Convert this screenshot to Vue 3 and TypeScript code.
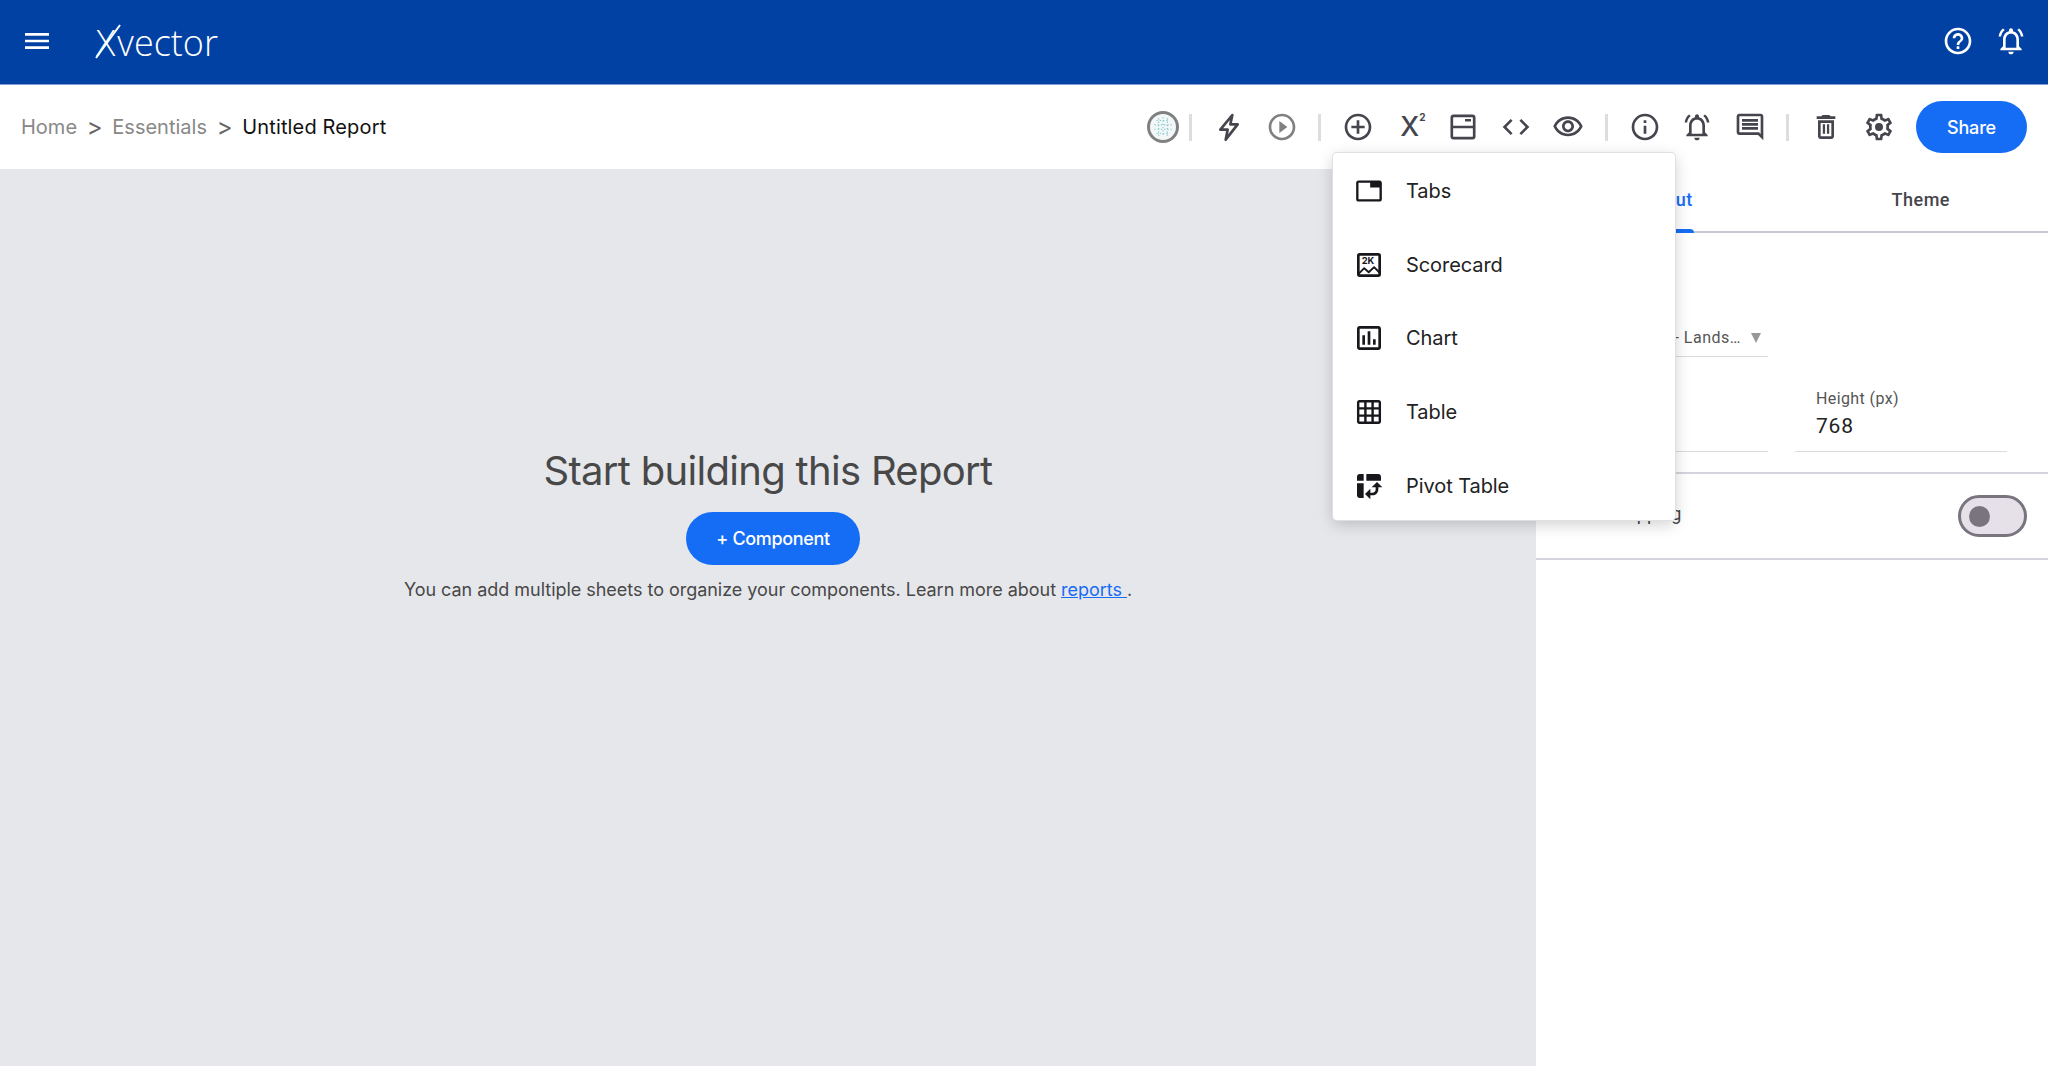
<script setup lang="ts">
interface IconButton {
  name: string
  path: string
}

const circle = 'M12 2C6.48 2 2 6.48 2 12s4.48 10 10 10 10-4.48 10-10S17.52 2 12 2zm0 18c-4.41 0-8-3.59-8-8s3.59-8 8-8 8 3.59 8 8-3.59 8-8 8z'

const bell = 'M12 22c1.1 0 2-.9 2-2h-4c0 1.1.9 2 2 2zm6-6v-5c0-3.07-1.63-5.64-4.5-6.32V4c0-.83-.67-1.5-1.5-1.5s-1.5.67-1.5 1.5v.68C7.64 5.36 6 7.92 6 11v5l-2 2v1h16v-1l-2-2zm-2 1H8v-6c0-2.48 1.51-4.5 4-4.5s4 2.02 4 4.5v6zM7.3 3.8 6 2.6C4.2 4 3 6.2 2.7 8.6h1.9c.3-1.9 1.3-3.6 2.7-4.8zm9.4 0 1.3-1.2c1.8 1.4 3 3.6 3.3 6h-1.9c-.3-1.9-1.3-3.6-2.7-4.8z'

const buildIcons: IconButton[] = [
  { name: 'add', path: `M13 7h-2v4H7v2h4v4h2v-4h4v-2h-4V7z${circle}` },
]

const viewIcons: IconButton[] = [
  { name: 'code', path: 'M9.4 16.6L4.8 12l4.6-4.6L8 6l-6 6 6 6 1.4-1.4zm5.2 0l4.6-4.6-4.6-4.6L16 6l6 6-6 6-1.4-1.4z' },
  { name: 'preview', path: 'M12 6c3.79 0 7.17 2.13 8.82 5.5C19.17 14.87 15.79 17 12 17s-7.17-2.13-8.82-5.5C4.83 8.13 8.21 6 12 6m0-2C7 4 2.73 7.11 1 11.5 2.73 15.89 7 19 12 19s9.27-3.11 11-7.5C21.27 7.11 17 4 12 4zm0 5c1.38 0 2.5 1.12 2.5 2.5S13.38 14 12 14s-2.5-1.12-2.5-2.5S10.62 9 12 9m0-2c-2.48 0-4.5 2.02-4.5 4.5S9.52 16 12 16s4.5-2.02 4.5-4.5S14.48 7 12 7z' },
]

const metaIcons: IconButton[] = [
  { name: 'info', path: `M11 7h2v2h-2zm0 4h2v6h-2z${circle}` },
  { name: 'alerts', path: bell },
  { name: 'comments', path: 'M21.99 4c0-1.1-.89-2-1.99-2H4c-1.1 0-2 .9-2 2v12c0 1.1.9 2 2 2h14l4 4-.01-18zM20 4v13.17L18.83 16H4V4h16zM6 12h12v2H6zm0-3h12v2H6zm0-3h12v2H6z' },
]

const trash = 'M16 9v10H8V9h8m-1.5-6h-5l-1 1H5v2h14V4h-3.5l-1-1zM18 7H6v12c0 1.1.9 2 2 2h8c1.1 0 2-.9 2-2V7zM9.6 10h1.7v7H9.6zm3.1 0h1.7v7h-1.7z'
const gear = 'M19.43 12.98c.04-.32.07-.64.07-.98 0-.34-.03-.66-.07-.98l2.11-1.65c.19-.15.24-.42.12-.64l-2-3.46c-.09-.16-.26-.25-.44-.25-.06 0-.12.01-.17.03l-2.49 1c-.52-.4-1.08-.73-1.69-.98l-.38-2.65C14.46 2.18 14.25 2 14 2h-4c-.25 0-.46.18-.49.42l-.38 2.65c-.61.25-1.17.59-1.69.98l-2.49-1c-.06-.02-.12-.03-.18-.03-.17 0-.34.09-.43.25l-2 3.46c-.13.22-.07.49.12.64l2.11 1.65c-.04.32-.07.65-.07.98 0 .33.03.66.07.98l-2.11 1.65c-.19.15-.24.42-.12.64l2 3.46c.09.16.26.25.44.25.06 0 .12-.01.17-.03l2.49-1c.52.4 1.08.73 1.69.98l.38 2.65c.03.24.24.42.49.42h4c.25 0 .46-.18.49-.42l.38-2.65c.61-.25 1.17-.59 1.69-.98l2.49 1c.06.02.12.03.18.03.17 0 .34-.09.43-.25l2-3.46c.12-.22.07-.49-.12-.64l-2.11-1.65zm-1.98-1.71c.04.31.05.52.05.73 0 .21-.02.43-.05.73l-.14 1.13.89.7 1.08.84-.7 1.21-1.27-.51-1.04-.42-.9.68c-.43.32-.84.56-1.25.73l-1.06.43-.16 1.13-.2 1.35h-1.4l-.19-1.35-.16-1.13-1.06-.43c-.43-.18-.83-.41-1.23-.71l-.91-.7-1.06.43-1.27.51-.7-1.21 1.08-.84.89-.7-.14-1.13c-.03-.31-.05-.54-.05-.74s.02-.43.05-.73l.14-1.13-.89-.7-1.08-.84.7-1.21 1.27.51 1.04.42.9-.68c.43-.32.84-.56 1.25-.73l1.06-.43.16-1.13.2-1.35h1.39l.19 1.35.16 1.13 1.06.43c.43.18.83.41 1.23.71l.91.7 1.06-.43 1.27-.51.7 1.21-1.07.85-.89.7.14 1.13zM12 9a3 3 0 1 0 0 6 3 3 0 0 0 0-6z'

const menuItems = [
  { label: 'Tabs', viewBox: '-1.7 -1.7 27.4 27.4', path: 'M21 3H3c-1.1 0-2 .9-2 2v14c0 1.1.9 2 2 2h18c1.1 0 2-.9 2-2V5c0-1.1-.9-2-2-2zm0 16H3V5h10v4h8v10z' },
  { label: 'Scorecard', viewBox: '0 0 24 24', path: '' },
  { label: 'Chart', viewBox: '0 0 24 24', path: 'M19 3H5c-1.1 0-2 .9-2 2v14c0 1.1.9 2 2 2h14c1.1 0 2-.9 2-2V5c0-1.1-.9-2-2-2zm0 16H5V5h14v14zM7 10h2v7H7zm4-3h2v10h-2zm4 6h2v4h-2z' },
  { label: 'Table', viewBox: '-1.3 -1.3 26.6 26.6', path: 'M20 2H4c-1.1 0-2 .9-2 2v16c0 1.1.9 2 2 2h16c1.1 0 2-.9 2-2V4c0-1.1-.9-2-2-2zM8 20H4v-4h4v4zm0-6H4v-4h4v4zm0-6H4V4h4v4zm6 12h-4v-4h4v4zm0-6h-4v-4h4v4zm0-6h-4V4h4v4zm6 12h-4v-4h4v4zm0-6h-4v-4h4v4zm0-6h-4V4h4v4z' },
  { label: 'Pivot Table', viewBox: '0 0 24 24', path: 'M10 8h11V5c0-1.1-.9-2-2-2h-9v5zM3 8h5V3H5c-1.1 0-2 .9-2 2v3zm2 13h3V10H3v9c0 1.1.9 2 2 2zm8 1l-4-4 4-4zm1-9l4-4 4 4zm.58 6H13v-2h1.58c1.33 0 2.42-1.08 2.42-2.42V13h2v1.58c0 2.44-1.98 4.42-4.42 4.42z' },
]
</script>

<template>
  <div class="page">
    <header class="topbar">
      <svg class="top-icon menu-btn" viewBox="0 0 24 24"><path d="M3 18h18v-2H3v2zm0-5h18v-2H3v2zm0-7v2h18V6H3z" /></svg>
      <div class="logo">
        <span class="logo-x">X</span>vector
        <svg class="logo-stroke" viewBox="0 0 40 40"><line x1="1" y1="36" x2="25" y2="3" /></svg>
      </div>
      <div class="top-actions">
        <svg class="top-icon" viewBox="0 0 24 24"><path d="M11 18h2v-2h-2v2zm1-16C6.48 2 2 6.48 2 12s4.48 10 10 10 10-4.48 10-10S17.52 2 12 2zm0 18c-4.41 0-8-3.59-8-8s3.59-8 8-8 8 3.59 8 8-3.59 8-8 8zm0-14c-2.21 0-4 1.79-4 4h2c0-1.1.9-2 2-2s2 .9 2 2c0 2-3 1.75-3 5h2c0-2.25 3-2.5 3-5 0-2.21-1.79-4-4-4z" /></svg>
        <svg class="top-icon" viewBox="0 0 24 24"><path :d="bell" /></svg>
      </div>
    </header>

    <div class="toolbar">
      <nav class="crumbs">
        <span class="crumb">Home</span>
        <span class="crumb-sep">&gt;</span>
        <span class="crumb">Essentials</span>
        <span class="crumb-sep">&gt;</span>
        <span class="crumb current">Untitled Report</span>
      </nav>

      <div class="tools">
        <span class="avatar">
          <svg viewBox="0 0 24 24">
            <path d="M6 6h12M4 10h16M4 14h16M6 18h12M8 4v16M12 3v18M16 4v16" fill="none" stroke="#86c5ca" stroke-width="1" stroke-dasharray="1.2 1.8" />
          </svg>
        </span>
        <i class="sep" />
        <button class="tool" type="button">
          <svg viewBox="0 0 24 24"><path class="outline" d="M14.5 3 5.5 14H11l-1.5 7.5L18.5 10H13z" /></svg>
        </button>
        <button class="tool muted" type="button">
          <svg viewBox="0 0 24 24"><path :d="`M10 16.5l6-4.5-6-4.5v9z${circle}`" /></svg>
        </button>
        <i class="sep" />
        <button v-for="icon in buildIcons" :key="icon.name" class="tool" type="button">
          <svg viewBox="0 0 24 24"><path :d="icon.path" /></svg>
        </button>
        <button class="tool formula" type="button">X<sup>2</sup></button>
        <button class="tool" type="button">
          <svg viewBox="0 0 24 24">
            <rect class="outline" x="3.6" y="3.6" width="16.8" height="16.8" rx="1.4" />
            <path d="M3.6 11h16.8v2H3.6zM13.5 6h4.5v1.8h-4.5z" />
          </svg>
        </button>
        <button v-for="icon in viewIcons" :key="icon.name" class="tool" type="button">
          <svg viewBox="0 0 24 24"><path :d="icon.path" /></svg>
        </button>
        <i class="sep" />
        <button v-for="icon in metaIcons" :key="icon.name" class="tool" type="button">
          <svg viewBox="0 0 24 24"><path :d="icon.path" /></svg>
        </button>
        <i class="sep" />
        <button class="tool" type="button">
          <svg viewBox="0 0 24 24"><path :d="trash" /></svg>
        </button>
        <button class="tool" type="button">
          <svg viewBox="0 0 24 24"><path :d="gear" /></svg>
        </button>
        <button class="share" type="button">Share</button>
      </div>

      <ul class="add-menu">
        <li v-for="item in menuItems" :key="item.label" class="add-item">
          <svg v-if="item.path" :viewBox="item.viewBox"><path :d="item.path" /></svg>
          <svg v-else viewBox="0 0 24 24">
            <rect class="outline" x="4" y="4" width="16" height="16" rx="1" />
            <text class="kpi" x="6.5" y="11.4">2K</text>
            <path class="outline zig" d="M4 18.8l4.4-4.4 3.4 3 4-3.8 4.2 4.2" />
          </svg>
          <span>{{ item.label }}</span>
        </li>
      </ul>
    </div>

    <main class="workspace">
      <section class="canvas">
        <h1>Start building this Report</h1>
        <button class="add-component" type="button">+ Component</button>
        <p>
          You can add multiple sheets to organize your components. Learn more about
          <a href="#">reports </a>.
        </p>
      </section>

      <aside class="panel">
        <div class="tabs">
          <div class="tab active">Layout</div>
          <div class="tab">Theme</div>
        </div>

        <div class="form">
          <div class="select">
            <span>A4 - Lands…</span>
            <i class="caret" />
          </div>
          <div class="sizes">
            <div class="field">
              <label>Width (px)</label>
              <div class="value">1024</div>
            </div>
            <div class="field">
              <label>Height (px)</label>
              <div class="value">768</div>
            </div>
          </div>
        </div>

        <div class="toggle-row">
          <span class="toggle-label">Grid Snapping</span>
          <span class="switch"><i /></span>
        </div>
      </aside>
    </main>
  </div>
</template>

<style scoped>
.page {
  display: flex;
  flex-direction: column;
  height: 1066px;
  overflow: hidden;
  font-family: Inter, "Liberation Sans", sans-serif;
  background: #fff;
}

.topbar {
  display: flex;
  align-items: center;
  flex: 0 0 85px;
  box-sizing: border-box;
  padding: 0 21px 2px 21px;
  background: #0041a3;
  border-bottom: 1px solid #7d9fd4;
}

.top-icon {
  width: 32px;
  height: 32px;
  fill: #fff;
}

.logo {
  position: relative;
  margin: 4px 0 0 43px;
  font-family: "Open Sans", sans-serif;
  font-size: 36px;
  font-weight: 300;
  line-height: 44px;
  white-space: nowrap;
  color: #fff;
}

.logo-x {
  margin-right: 2px;
}

.logo-stroke {
  position: absolute;
  top: 1px;
  left: -1px;
  width: 40px;
  height: 40px;
}

.logo-stroke line {
  stroke: #fff;
  stroke-width: 2px;
}

.top-actions {
  display: flex;
  gap: 21px;
  margin-left: auto;
}

.toolbar {
  position: relative;
  display: flex;
  align-items: center;
  justify-content: space-between;
  flex: 0 0 84px;
  padding: 0 21px;
  background: #fff;
}

.crumbs {
  display: flex;
  align-items: center;
  font-size: 20px;
  color: #888;
}

.crumb-sep {
  margin: 0 9.7px;
  font-size: 24px;
  line-height: 24px;
  color: #666;
}

.current {
  letter-spacing: 0.15px;
  color: #111;
}

.tools {
  display: flex;
  align-items: center;
}

.avatar {
  box-sizing: border-box;
  width: 32px;
  height: 32px;
  border: 3px solid #808080;
  border-radius: 50%;
  background: #f2f8f8;
  overflow: hidden;
}

.avatar svg {
  display: block;
  width: 26px;
  height: 26px;
}

.sep {
  width: 3px;
  height: 27px;
  margin: 0 10.2px;
  background: #dddddd;
}

.tool {
  display: flex;
  align-items: center;
  justify-content: center;
  width: 52.7px;
  height: 52px;
  padding: 0;
  border: 0;
  background: none;
  fill: #45454d;
}

.tool svg {
  width: 32px;
  height: 32px;
}

.muted {
  fill: #808080;
}

.outline {
  fill: none;
  stroke: #45454d;
  stroke-width: 2;
  stroke-linejoin: round;
}

.formula {
  align-items: flex-start;
  padding: 10px 0 0 5px;
  font-family: Inter, sans-serif;
  font-size: 27px;
  font-weight: 500;
  line-height: 32px;
  color: #45454d;
}

.formula sup {
  margin-top: 0;
  font-size: 10px;
  font-weight: 700;
  line-height: 12px;
}

.share {
  width: 111px;
  height: 52px;
  margin-left: 11px;
  border: 0;
  border-radius: 26px;
  background: #166df5;
  font-family: Inter, sans-serif;
  font-size: 18px;
  font-weight: 500;
  letter-spacing: -0.2px;
  color: #fff;
}

.add-menu {
  position: absolute;
  top: 68px;
  left: 1333px;
  z-index: 2;
  box-sizing: border-box;
  width: 342px;
  height: 367px;
  margin: 0;
  padding: 1px 0 0;
  border-radius: 4px;
  background: #fff;
  box-shadow: 0 0 0 1px #e0e0e0, 0 4px 16px rgba(0, 0, 0, 0.2);
  list-style: none;
}

.add-item {
  display: flex;
  align-items: center;
  gap: 21px;
  height: 73.8px;
  padding-left: 20px;
  font-size: 20px;
  letter-spacing: -0.08px;
  color: #222;
  fill: #17171c;
}

.add-item svg {
  flex: none;
  width: 32px;
  height: 32px;
}

.add-item .outline {
  stroke: #17171c;
}

.add-item .zig {
  stroke-width: 1.4;
}

.kpi {
  font-family: Inter, sans-serif;
  font-size: 7px;
  font-weight: 700;
}

.workspace {
  display: flex;
  flex: 1;
  min-height: 0;
}

.canvas {
  display: flex;
  flex-direction: column;
  align-items: center;
  flex: 0 0 1536px;
  padding-top: 276px;
  box-sizing: border-box;
  background: #e6e7eb;
  color: #484848;
}

.canvas h1 {
  margin: 0;
  font-size: 40px;
  font-weight: 400;
  letter-spacing: -0.7px;
  line-height: 52px;
}

.add-component {
  width: 174px;
  height: 53px;
  margin: 15px 0 0 10px;
  border: 0;
  border-radius: 27px;
  background: #166df5;
  font-family: Inter, sans-serif;
  font-size: 18px;
  font-weight: 500;
  letter-spacing: -0.35px;
  color: #fff;
}

.canvas p {
  margin: 13px 0 0;
  font-size: 18px;
  letter-spacing: -0.03px;
  line-height: 24px;
}

.canvas a {
  color: #166df5;
}

.panel {
  flex: 1;
  background: #fff;
  font-family: Roboto, sans-serif;
}

.tabs {
  display: grid;
  grid-template-columns: 1fr 1fr;
  height: 64px;
  box-sizing: border-box;
  padding-bottom: 2px;
  border-bottom: 2px solid #c9c8d4;
}

.tab {
  position: relative;
  display: flex;
  align-items: center;
  justify-content: center;
  font-size: 18px;
  font-weight: 500;
  letter-spacing: 0.5px;
  color: #45454d;
}

.tab.active {
  color: #166df5;
}

.tab.active::after {
  content: "";
  position: absolute;
  right: 99px;
  bottom: -4px;
  left: 98px;
  height: 4px;
  border-radius: 4px 4px 0 0;
  background: #166df5;
}

.form {
  box-sizing: border-box;
  height: 241px;
  padding: 84px 42px 0 20px;
  border-bottom: 2px solid #d5d4de;
}

.select {
  display: flex;
  align-items: center;
  justify-content: flex-end;
  gap: 10px;
  box-sizing: border-box;
  width: 212px;
  height: 40px;
  padding: 2px 7px 0 0;
  border-bottom: 1px solid #dcdcdc;
  font-size: 16px;
  letter-spacing: 0.5px;
  color: #555;
}

.caret {
  width: 0;
  height: 0;
  border-top: 10px solid #999;
  border-right: 5px solid transparent;
  border-left: 5px solid transparent;
}

.sizes {
  display: grid;
  grid-template-columns: 212px 212px;
  gap: 27px;
  margin-top: 29px;
}

.field {
  box-sizing: border-box;
  height: 66px;
  padding: 2px 0 0 21px;
  border-bottom: 1px solid #dcdcdc;
}

.field label {
  display: block;
  font-size: 16px;
  line-height: 22px;
  letter-spacing: 0.4px;
  color: #555;
}

.value {
  font-size: 21px;
  line-height: 32px;
  letter-spacing: 0.8px;
  color: #222;
}

.toggle-row {
  display: flex;
  align-items: center;
  justify-content: space-between;
  box-sizing: border-box;
  height: 86px;
  padding: 0 22px 0 33px;
  border-bottom: 2px solid #d5d4de;
  font-size: 18px;
  color: #444;
}

.toggle-label {
  margin-bottom: 6px;
}

.switch {
  display: flex;
  align-items: center;
  box-sizing: border-box;
  width: 69px;
  height: 42px;
  padding-left: 8px;
  border: 3px solid #79747e;
  border-radius: 21px;
  background: #e6e0e9;
}

.switch i {
  width: 21px;
  height: 21px;
  border-radius: 50%;
  background: #79747e;
}
</style>
